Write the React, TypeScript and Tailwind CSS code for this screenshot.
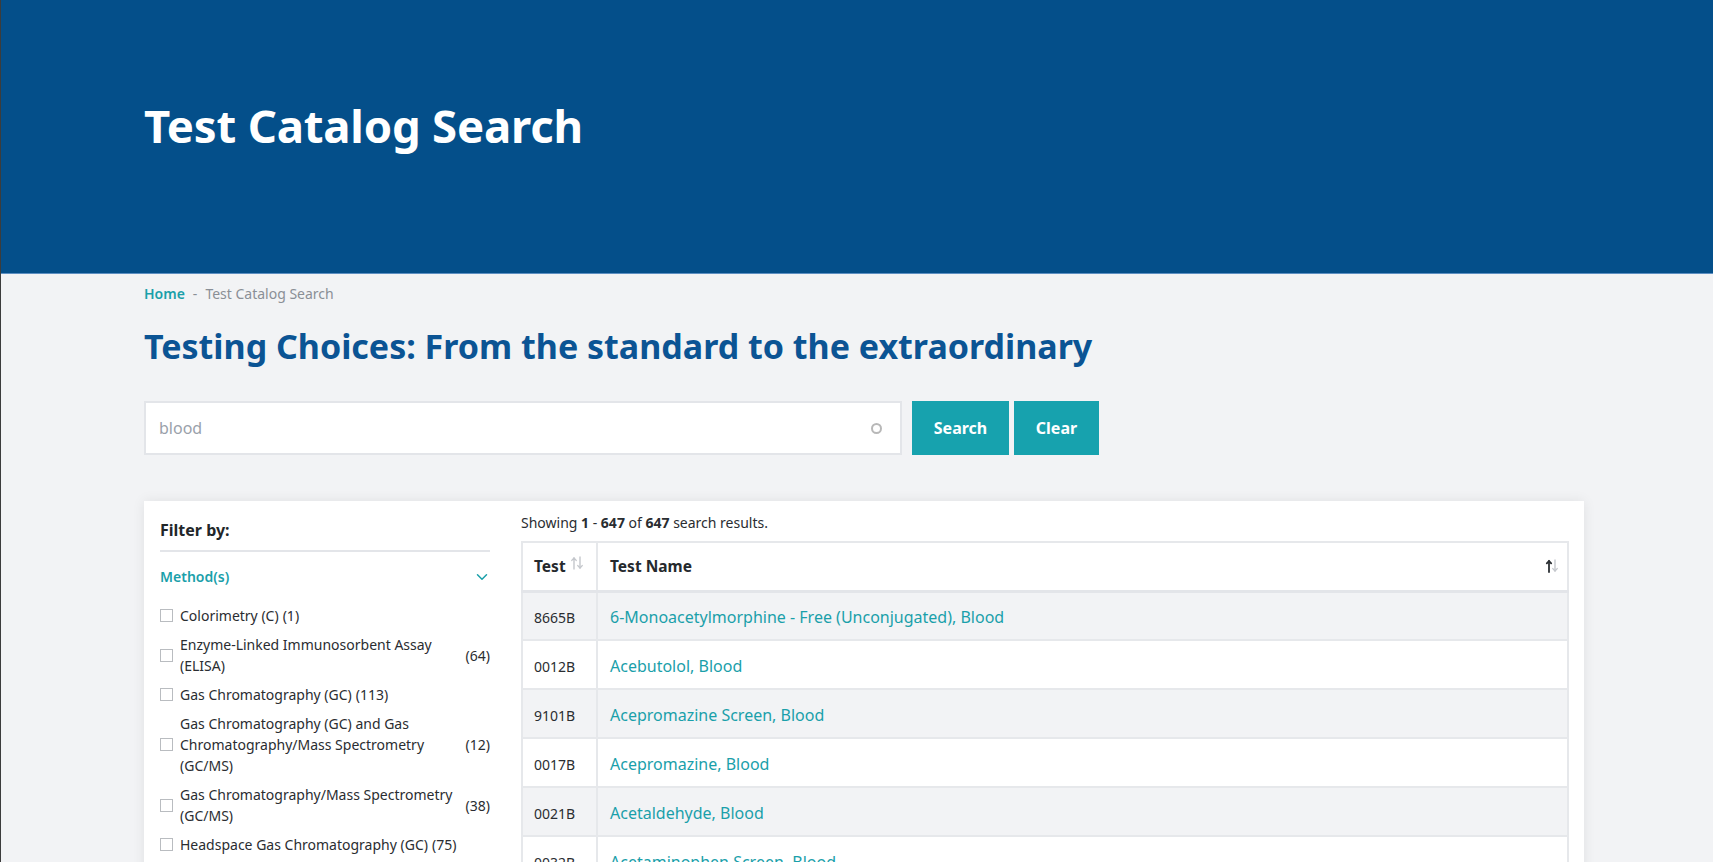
import { ChevronDown } from "lucide-react";

const methods = [
  { label: "Colorimetry (C)", count: 1 },
  { label: "Enzyme-Linked Immunosorbent Assay (ELISA)", count: 64 },
  { label: "Gas Chromatography (GC)", count: 113 },
  { label: "Gas Chromatography (GC) and Gas Chromatography/Mass Spectrometry (GC/MS)", count: 12 },
  { label: "Gas Chromatography/Mass Spectrometry (GC/MS)", count: 38 },
  { label: "Headspace Gas Chromatography (GC)", count: 75 },
  { label: "High Performance Liquid Chromatography (HPLC)", count: 21 },
];

const results = [
  { code: "8665B", name: "6-Monoacetylmorphine - Free (Unconjugated), Blood" },
  { code: "0012B", name: "Acebutolol, Blood" },
  { code: "9101B", name: "Acepromazine Screen, Blood" },
  { code: "0017B", name: "Acepromazine, Blood" },
  { code: "0021B", name: "Acetaldehyde, Blood" },
  { code: "0032B", name: "Acetaminophen Screen, Blood" },
  { code: "0033B", name: "Acetaminophen, Blood" },
];

function SortIcon({ active }: { active?: boolean }) {
  return (
    <svg width="14" height="14" viewBox="0 0 14 14" fill="none" strokeWidth="1.4" strokeLinecap="round">
      <g stroke={active ? "#2b2f33" : "#c4c7cc"} strokeWidth={active ? 1.8 : 1.4}>
        <path d="M4 13V2" />
        <path d="M1.8 4.4 4 2l2.2 2.4" />
      </g>
      <g stroke="#c4c7cc">
        <path d="M10 1v11" />
        <path d="M7.8 9.6 10 12l2.2-2.4" />
      </g>
    </svg>
  );
}

export default function App() {
  return (
    <div
      className="h-screen overflow-hidden bg-[#f2f3f5] border-l border-[#3c3c3c]"
      style={{ fontFamily: '"Noto Sans", "Open Sans", sans-serif' }}
    >
      <header className="h-[274px] bg-[#044f8a] border-b border-[#5d8fc2] pl-[143px] pt-[97px]">
        <h1 className="text-[45.5px] leading-[56px] font-bold text-white tracking-[-0.2px]">Test Catalog Search</h1>
      </header>

      <main className="pl-[143px] pr-[129px]">
        <nav className="pt-[10px] text-[14px] leading-[20px] flex items-center gap-[8px]">
          <span className="font-semibold text-[#1aa0aa]">Home</span>
          <span className="text-[#8a8f96]">-</span>
          <span className="text-[#8a8f96]">Test Catalog Search</span>
        </nav>

        <h2 className="mt-[22px] text-[34px] leading-[40px] font-bold text-[#0b5494]">
          Testing Choices: From the standard to the extraordinary
        </h2>

        <div className="mt-[35px] flex items-stretch h-[54px]">
          <div className="w-[758px] bg-white border-2 border-[#e3e5e9] flex items-center pl-[13px] pr-[18px]">
            <span className="flex-1 text-[16px] text-[#9aa1aa]">blood</span>
            <span className="w-[11px] h-[11px] rounded-full border-2 border-[#b8b8b8]" />
          </div>
          <button className="ml-[10px] w-[97px] bg-[#17a2ae] text-white font-bold text-[16px]">Search</button>
          <button className="ml-[5px] w-[85px] bg-[#17a2ae] text-white font-bold text-[16px]">Clear</button>
        </div>

        <section className="mt-[46px] bg-white shadow-[0_0_12px_rgba(0,0,0,0.08)] flex pl-[16px] pr-[15px] pt-[12px] pb-6">
          <aside className="w-[330px] shrink-0 pt-[5px]">
            <div className="text-[16px] leading-[24px] font-bold text-[#222629] pb-[8px] border-b-2 border-[#e3e5e9]">
              Filter by:
            </div>
            <div className="mt-[15px] flex items-center justify-between text-[14px] leading-[20px] font-semibold text-[#1aa0aa]">
              <span>Method(s)</span>
              <ChevronDown size={18} strokeWidth={2} className="mr-[-1px]" />
            </div>
            <ul className="mt-[18px] space-y-2">
              {methods.map((m) => (
                <li key={m.label} className="flex items-center text-[14px] leading-[21px] text-[#2a2d31]">
                  <span className="w-[13px] h-[13px] shrink-0 border border-[#b9bcc0] bg-white mr-[7px]" />
                  <span className="min-w-0">{m.label}</span>
                  <span className="shrink-0 ml-[4px]">({m.count})</span>
                </li>
              ))}
            </ul>
          </aside>

          <div className="flex-1 ml-[31px]">
            <p className="text-[14px] leading-[20px] text-[#2a2d31]">
              Showing <b>1</b> - <b>647</b> of <b>647</b> search results.
            </p>
            <table className="mt-[8px] w-full border-collapse border-2 border-[#e6e8eb] text-left">
              <thead>
                <tr className="h-[49px] border-b-[3px] border-[#e3e5e9]">
                  <th className="w-[75px] pl-[11px] border-r-2 border-[#e6e8eb] text-[15.5px] font-bold text-[#25292d]">
                    <span className="inline-flex items-center gap-[4px]">
                      Test
                      <span className="-mt-[6px]">
                        <SortIcon />
                      </span>
                    </span>
                  </th>
                  <th className="pl-[12px] pr-[8px] text-[15.5px] font-bold text-[#25292d]">
                    <div className="flex items-center justify-between">
                      <span>Test Name</span>
                      <SortIcon active />
                    </div>
                  </th>
                </tr>
              </thead>
              <tbody>
                {results.map((r, i) => (
                  <tr
                    key={r.code}
                    className={`h-[49px] border-b-2 border-[#e6e8eb] ${i % 2 === 0 ? "bg-[#f2f3f5]" : "bg-white"}`}
                  >
                    <td className="pl-[11px] pt-[3px] border-r-2 border-[#e6e8eb] text-[14px] text-[#2a2d31]">{r.code}</td>
                    <td className="pl-[12px] pt-[3px] text-[16px] text-[#1aa0aa]">{r.name}</td>
                  </tr>
                ))}
              </tbody>
            </table>
          </div>
        </section>
      </main>
    </div>
  );
}
